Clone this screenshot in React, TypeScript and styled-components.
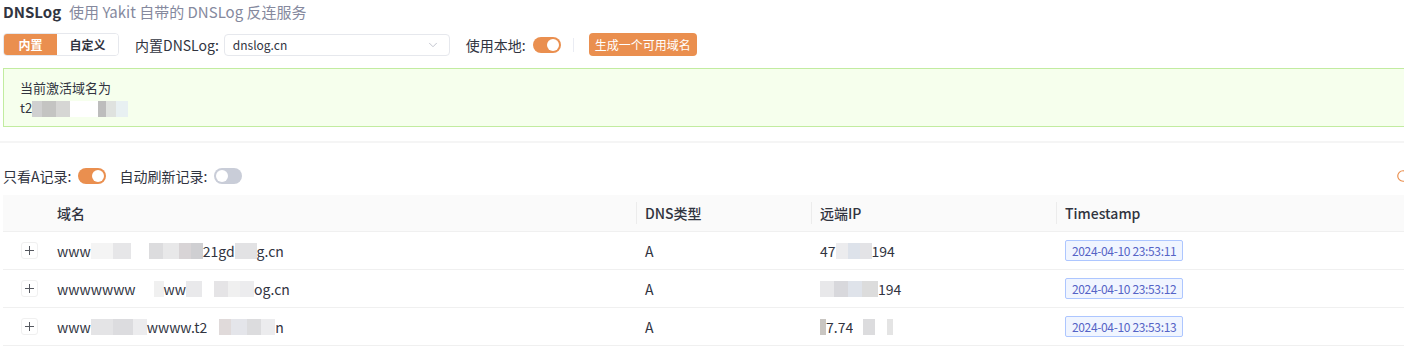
import React from 'react'
import styled, { createGlobalStyle } from 'styled-components'
import { ChevronDown, RotateCw } from 'lucide-react'

const Global = createGlobalStyle`
  html, body {
    margin: 0;
    padding: 0;
    background: #fff;
    overflow: hidden;
  }
  body {
    font-family: "Noto Sans CJK SC", "Noto Sans", sans-serif;
    color: #31343f;
  }
`

const ORANGE = '#ea8f4f'

const Page = styled.div`
  width: 1418px;
  display: flex;
  flex-direction: column;
`

const TopCard = styled.section`
  padding: 0 0 14px 3px;
  display: flex;
  flex-direction: column;
`

const TitleRow = styled.div`
  display: flex;
  align-items: center;
  gap: 8px;
  height: 22px;
`

const Title = styled.span`
  font-size: 15px;
  font-weight: 600;
  color: #31343f;
`

const SubTitle = styled.span`
  font-size: 15px;
  color: #85899e;
`

const Controls = styled.div`
  display: flex;
  align-items: center;
  margin-top: 11px;
  height: 23px;
`

const Segmented = styled.div`
  display: flex;
  height: 23px;
  border: 1px solid #e6e8ed;
  border-radius: 4px;
  box-sizing: border-box;
  overflow: hidden;
`

const SegItem = styled.div<{ $active?: boolean }>`
  display: flex;
  align-items: center;
  justify-content: center;
  width: ${p => (p.$active ? '53px' : '61px')};
  font-size: 12px;
  font-weight: 700;
  background: ${p => (p.$active ? ORANGE : '#fff')};
  color: ${p => (p.$active ? '#fff' : '#31343f')};
`

const Label = styled.span<{ $ml?: number; $mr?: number }>`
  font-size: 14px;
  color: #31343f;
  margin-left: ${p => p.$ml ?? 0}px;
  margin-right: ${p => p.$mr ?? 7}px;
  white-space: nowrap;
`

const Select = styled.div`
  display: flex;
  align-items: center;
  justify-content: space-between;
  width: 226px;
  height: 22px;
  box-sizing: border-box;
  border: 1px solid #e6e8ed;
  border-radius: 4px;
  padding: 0 9px 0 8px;
  font-size: 12px;
  color: #31343f;
  svg {
    color: #b9bdc8;
  }
`

const Switch = styled.div<{ $on?: boolean }>`
  width: 28px;
  height: 16px;
  border-radius: 8px;
  background: ${p => (p.$on ? ORANGE : '#c9cdd8')};
  display: flex;
  align-items: center;
  justify-content: ${p => (p.$on ? 'flex-end' : 'flex-start')};
  padding: 0 2px;
  box-sizing: border-box;
  &::after {
    content: '';
    width: 12px;
    height: 12px;
    border-radius: 50%;
    background: #fff;
  }
`

const VLine = styled.div`
  width: 1px;
  height: 14px;
  background: #eaecf3;
  margin: 0 15px 0 12px;
`

const PrimaryButton = styled.button`
  height: 23px;
  padding: 0 6px;
  border: none;
  border-radius: 4px;
  background: ${ORANGE};
  color: #fff;
  font-family: inherit;
  font-size: 12px;
`

const Alert = styled.div`
  margin-top: 12px;
  background: #f6ffed;
  border: 1px solid #c2eca0;
  border-right: none;
  padding: 9px 16px 8px;
  font-size: 13px;
  line-height: 20px;
  color: #31343f;
`

const Strip = styled.div`
  height: 2px;
  background: #f5f5f5;
`

const BottomCard = styled.section`
  padding-left: 3px;
  display: flex;
  flex-direction: column;
`

const Toolbar = styled.div`
  display: flex;
  align-items: center;
  justify-content: space-between;
  height: 22px;
  margin: 22px 0 8px;
  padding-right: 8px;
`

const ToolGroup = styled.div`
  display: flex;
  align-items: center;
`

const Grid = styled.div`
  display: grid;
  grid-template-columns: 46px 587px 175px 245px 1fr;
`

const HeadCell = styled.div`
  display: flex;
  align-items: center;
  height: 36px;
  background: #fafafa;
  border-bottom: 1px solid #f0f0f0;
  font-size: 14px;
  font-weight: 500;
  color: #31343f;
`

const Sep = styled.div`
  width: 1px;
  height: 22px;
  background: #ececec;
  margin-right: 8px;
`

const HeadText = styled.span<{ $pl?: number }>`
  padding-left: ${p => p.$pl ?? 0}px;
`

const Cell = styled.div<{ $pl?: number }>`
  display: flex;
  align-items: center;
  height: 37px;
  border-bottom: 1px solid #f0f0f0;
  padding-left: ${p => p.$pl ?? 9}px;
  font-size: 14px;
  color: #31343f;
  white-space: nowrap;
`

const ExpandCell = styled(Cell)`
  justify-content: center;
  padding-left: 0;
`

const ExpandBtn = styled.div`
  position: relative;
  width: 17px;
  height: 17px;
  box-sizing: border-box;
  border: 1px solid #f0f0f0;
  border-radius: 3px;
  margin-left: 6px;
  &::before,
  &::after {
    content: '';
    position: absolute;
    background: #55585f;
  }
  &::before {
    left: 3px;
    right: 3px;
    top: 7px;
    height: 1px;
  }
  &::after {
    top: 3px;
    bottom: 3px;
    left: 7px;
    width: 1px;
  }
`

const Tag = styled.span`
  display: inline-flex;
  align-items: center;
  height: 21px;
  box-sizing: border-box;
  padding: 0 6px;
  border: 1px solid #adc6ff;
  background: #f0f5ff;
  border-radius: 2px;
  font-size: 12px;
  letter-spacing: -0.35px;
  color: #5563c6;
`

const Mosaic = styled.span`
  display: inline-flex;
  vertical-align: middle;
  height: 16px;
`

const Tile = styled.span<{ $w: number; $c: string }>`
  display: inline-block;
  width: ${p => p.$w}px;
  height: 100%;
  background: ${p => p.$c};
`

const Blur = ({ tiles }: { tiles: [number, string][] }) => (
  <Mosaic>
    {tiles.map(([w, c], i) => (
      <Tile key={i} $w={w} $c={c} />
    ))}
  </Mosaic>
)

const rows = [
  {
    domain: (
      <>
        www<Blur tiles={[[22, '#f4f4f4'], [18, '#e6e6e8'], [18, '#fff'], [14, '#dcdcde'], [16, '#e8e8e9'], [12, '#d8d4d6'], [12, '#cfcfd2']]} />21gd
        <Blur tiles={[[22, '#e2e2e4']]} />g.cn
      </>
    ),
    ip: (
      <>
        47<Blur tiles={[[12, '#ececee'], [12, '#dde2ea'], [12, '#e3e3e6']]} />194
      </>
    ),
    ts: '2024-04-10 23:53:11',
  },
  {
    domain: (
      <>
        wwwwwww<Blur tiles={[[18, '#fff'], [10, '#f0f0f0']]} />ww
        <Blur tiles={[[16, '#e9e9eb'], [12, '#fff'], [14, '#e5e4e6'], [12, '#f0f0f0'], [14, '#ececee']]} />og.cn
      </>
    ),
    ip: (
      <>
        <Blur tiles={[[14, '#e8e8ea'], [14, '#d8d8dc'], [14, '#dfe3ea'], [16, '#dcdcdc']]} />194
      </>
    ),
    ts: '2024-04-10 23:53:12',
  },
  {
    domain: (
      <>
        www<Blur tiles={[[22, '#e4e4e6'], [20, '#dcdcdf'], [14, '#ececee']]} />wwww.t2
        <Blur tiles={[[12, '#fff'], [12, '#e0dada'], [16, '#e4e5ea'], [14, '#dcdcde'], [14, '#ececee']]} />n
      </>
    ),
    ip: (
      <>
        <Blur tiles={[[6, '#c9c6c2']]} />7.74
        <Blur tiles={[[10, '#fff'], [12, '#dcdcde'], [12, '#fff'], [6, '#e4e4e4']]} />
      </>
    ),
    ts: '2024-04-10 23:53:13',
  },
]

export default function App() {
  return (
    <Page>
      <Global />
      <TopCard>
        <TitleRow>
          <Title>DNSLog</Title>
          <SubTitle>使用 Yakit 自带的 DNSLog 反连服务</SubTitle>
        </TitleRow>
        <Controls>
          <Segmented>
            <SegItem $active>内置</SegItem>
            <SegItem>自定义</SegItem>
          </Segmented>
          <Label $ml={16} $mr={5}>内置DNSLog:</Label>
          <Select>
            <span>dnslog.cn</span>
            <ChevronDown size={14} strokeWidth={1.5} />
          </Select>
          <Label $ml={16}>使用本地:</Label>
          <Switch $on />
          <VLine />
          <PrimaryButton>生成一个可用域名</PrimaryButton>
        </Controls>
        <Alert>
          <div>当前激活域名为</div>
          <div>
            t2<Blur tiles={[[10, '#d0d0d0'], [14, '#c4c4c2'], [14, '#d6d6d4'], [28, '#fff'], [8, '#bdbdbd'], [10, '#dfe2df'], [12, '#e8f0f2']]} />
          </div>
        </Alert>
      </TopCard>
      <Strip />
      <BottomCard>
        <Toolbar>
          <ToolGroup>
            <Label>只看A记录:</Label>
            <Switch $on />
            <Label $ml={13}>自动刷新记录:</Label>
            <Switch />
          </ToolGroup>
          <RotateCw size={14} color={ORANGE} />
        </Toolbar>
        <Grid>
          <HeadCell />
          <HeadCell>
            <HeadText $pl={8}>域名</HeadText>
          </HeadCell>
          <HeadCell>
            <Sep />
            <HeadText>DNS类型</HeadText>
          </HeadCell>
          <HeadCell>
            <Sep />
            <HeadText>远端IP</HeadText>
          </HeadCell>
          <HeadCell>
            <Sep />
            <HeadText>Timestamp</HeadText>
          </HeadCell>
          {rows.map(r => (
            <React.Fragment key={r.ts}>
              <ExpandCell>
                <ExpandBtn />
              </ExpandCell>
              <Cell $pl={8}>{r.domain}</Cell>
              <Cell>A</Cell>
              <Cell>{r.ip}</Cell>
              <Cell>
                <Tag>{r.ts}</Tag>
              </Cell>
            </React.Fragment>
          ))}
        </Grid>
      </BottomCard>
    </Page>
  )
}
